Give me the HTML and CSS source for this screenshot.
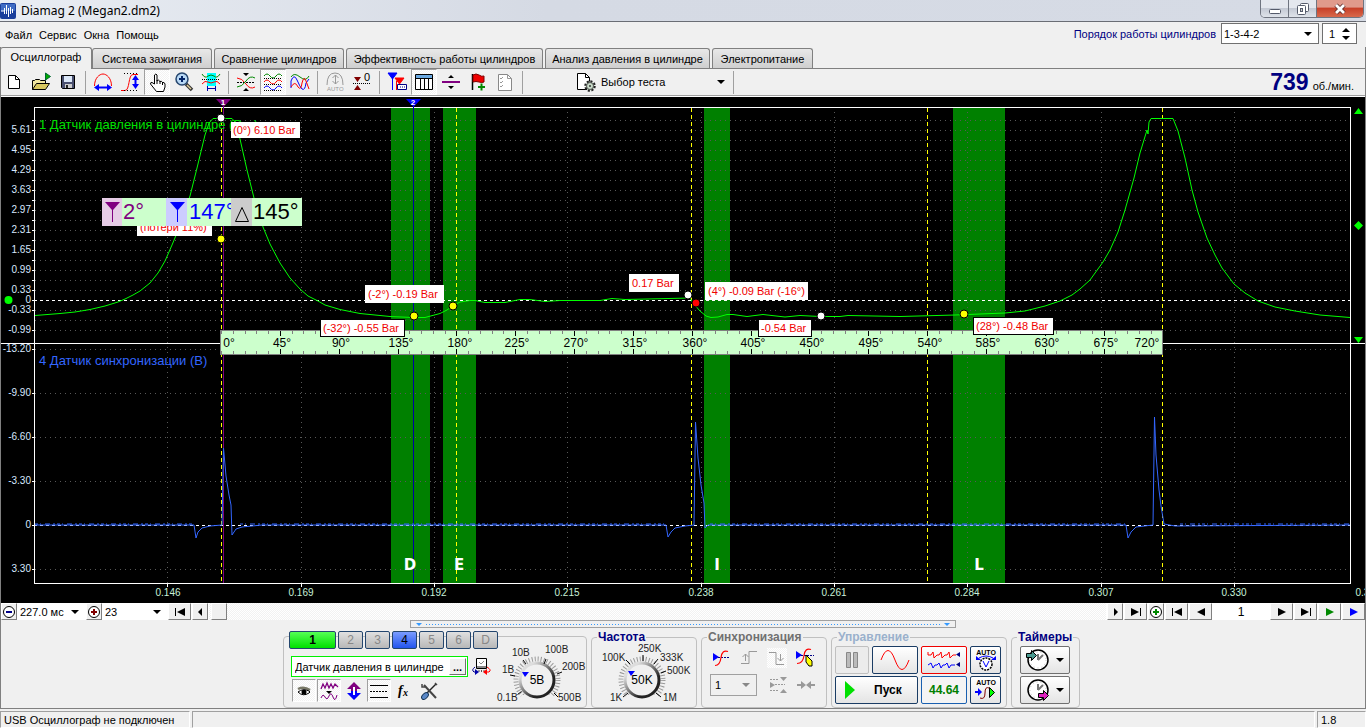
FILE: index.html
```html
<!DOCTYPE html>
<html lang="ru">
<head>
<meta charset="utf-8">
<title>Diamag 2 (Megan2.dm2)</title>
<link rel="stylesheet" href="styles.css">
</head>
<body>
<div class="window">
<header class="titlebar">
  <svg class="app-icon" width="16" height="16" viewBox="0 0 16 16"><rect width="16" height="16" rx="2" fill="#1a3f9c"/><rect x="1" y="1" width="14" height="7" fill="#3f6cc4"/><path d="M1 8h3M4.500 5v6M6.500 2v9M8.500 5v9M10.500 4v7M12.500 6v4" stroke="#fff" fill="none"/></svg>
  <h1 class="title">Diamag 2 (Megan2.dm2)</h1>
  <div class="winbtns">
    <button class="win win-min" aria-label="Свернуть"><svg width="12" height="12" viewBox="0 0 12 12"><rect x=".5" y="6.500" width="11" height="4" rx="1" fill="#fff" stroke="#555b6b"/></svg></button>
    <button class="win win-max" aria-label="Развернуть"><svg width="12" height="12" viewBox="0 0 12 12"><rect x="3.500" y=".5" width="8" height="8" rx="1" fill="#fff" stroke="#555b6b"/><rect x=".5" y="2.500" width="8" height="9" rx="1" fill="#fff" stroke="#555b6b"/><rect x="3.500" y="5.500" width="2" height="3" fill="#ccc" stroke="#555b6b"/></svg></button>
    <button class="win win-close" aria-label="Закрыть"><svg width="14" height="12" viewBox="0 0 14 12"><path d="M3 2l8 8M11 2l-8 8" stroke="#5a2a2a" stroke-width="4.500"/><path d="M3 2l8 8M11 2l-8 8" stroke="#fff" stroke-width="2.800"/></svg></button>
  </div>
</header>
<div class="menurow">
  <nav class="menu"><button>Файл</button><button>Сервис</button><button>Окна</button><button>Помощь</button></nav>
  <div class="order">
    <label for="order">Порядок работы цилиндров</label>
    <span class="combo combo-order"><select id="order"><option>1-3-4-2</option></select></span>
    <span class="spin"><input type="text" value="1" aria-label="Номер цилиндра"><svg width="8" height="14" viewBox="0 0 8 14"><path d="M0 5l4-4 4 4zM0 9l4 4 4-4z"/></svg></span>
  </div>
</div>
<main class="main">
<div class="tabs" role="tablist">
  <button role="tab" class="tab active" aria-selected="true">Осциллограф</button>
  <button role="tab" class="tab tab-ign">Система зажигания</button>
  <button role="tab" class="tab tab-cmp">Сравнение цилиндров</button>
  <button role="tab" class="tab tab-eff">Эффективность работы цилиндров</button>
  <button role="tab" class="tab tab-prs">Анализ давления в цилиндре</button>
  <button role="tab" class="tab tab-pwr">Электропитание</button>
</div>
<div class="toolbar">
  <button class="tool" aria-label="Новый"><svg viewBox="0 0 20 20"><path d="M4.500 3.500h7l4 4v9h-11z" fill="#fff" stroke="#000"/><path d="M11.500 3.500v4h4" fill="none" stroke="#000"/></svg></button>
  <button class="tool" aria-label="Открыть"><svg viewBox="0 0 20 20"><path d="M1.500 17.500v-9h2l1-1h4l1 1h5v3" fill="#f0e6a0" stroke="#000"/><path d="M1.500 17.500l4-6h13l-4 6z" fill="#d8c860" stroke="#000"/><path d="M14.500 1v7l5-3.500z" fill="#0a0" stroke="#063"/></svg></button>
  <button class="tool" aria-label="Сохранить"><svg viewBox="0 0 20 20"><path d="M3.500 3.500h13v13h-12l-1-1z" fill="#4a5070" stroke="#000"/><path d="M6 4h8v6H6z" fill="#dce8f8"/><path d="M7 12h7v4H7z" fill="#ccc"/><path d="M8 13h2v3H8z" fill="#222"/></svg></button>
  <i class="sep"></i>
  <button class="tool" aria-label="Масштаб по горизонтали"><svg viewBox="0 0 20 20"><path d="M1.500 14c0-8 5-12 8.500-12s8.500 4 8.500 12" fill="none" stroke="red"/><path d="M4 15.500h12" stroke="#00f" stroke-width="2"/><path d="M6 12v7l-5-3.500zM14 12v7l5-3.500z" fill="#00f"/></svg></button>
  <button class="tool" aria-label="Масштаб по вертикали"><svg viewBox="0 0 20 20"><path d="M1 18.500h4c5 0 3-16 8-16h5" fill="none" stroke="red"/><path d="M4 1.500h15M4 18.500h15" stroke="#000" stroke-dasharray="1 2"/><path d="M15.500 5v10" stroke="#00f" stroke-width="2"/><path d="M12 8h7l-3.500-5zM12 12h7l-3.500 5z" fill="#00f"/></svg></button>
  <button class="tool pressed" aria-label="Рука"><svg viewBox="0 0 20 20"><path d="M7.500 12V3q1.500-2 2.500 0v6q1.500-2 3 .5 1.500-1 2.500 1 2-.5 2.500 1.500v3l-1.500 4.500h-7L3.500 12q0-2 1.500-1.500z" fill="#fff" stroke="#000"/><path d="M10 8v4M13 9v3M15.500 10v3" stroke="#000"/></svg></button>
  <button class="tool" aria-label="Лупа"><svg viewBox="0 0 20 20"><path d="M12 12l6 6" stroke="#333" stroke-width="3.500"/><path d="M13 13l4 4" stroke="#dc9" stroke-width="1.500"/><circle cx="8" cy="7" r="6" fill="#b8d8f4" stroke="#26466e" stroke-width="1.500"/><path d="M5 7h6M8 4v6" stroke="#026" stroke-width="2"/></svg></button>
  <button class="tool" aria-label="Интервал"><svg viewBox="0 0 20 20"><path d="M6 1h9v13H6z" fill="#0ff"/><path d="M1 2q3 5 6 2 3-2 6 0 3 3 6-2" fill="none" stroke="#080"/><path d="M1 7.500h18" stroke="#000" stroke-dasharray="1 1"/><path d="M1 12q3-4 6-2 3 2 6 0 3-2 6 2" fill="none" stroke="red"/><path d="M6.500 14v5M14.500 14v5M7 16.500h7" stroke="#00a"/></svg></button>
  <i class="sep"></i>
  <button class="tool" aria-label="Центрировать"><svg viewBox="0 0 20 20"><path d="M1 10.500h18" stroke="#000" stroke-dasharray="2 1"/><path d="M1 6q5 0 9 6t9 3" fill="none" stroke="red"/><path d="M1 15q5 0 9-6t9-3" fill="none" stroke="#080"/><path d="M7 1h6l-3 3zM7 19h6l-3-3z"/></svg></button>
  <button class="tool pressed" aria-label="Раздельно"><svg viewBox="0 0 20 20"><g fill="none"><path d="M1 4q3-4 6 0t6 0 6 0" stroke="#080"/><path d="M1 10q3-4 6 0t6 0 6 0" stroke="red"/><path d="M1 16q3-4 6 0t6 0 6 0" stroke="#00f"/><path d="M1 6.500h18M1 12.500h18M1 18.500h18" stroke="#000" stroke-dasharray="1 1"/></g></svg></button>
  <button class="tool" aria-label="Совместно"><svg viewBox="0 0 20 20"><g fill="none"><path d="M1 5q3-5 9 0t9-1" stroke="#080"/><path d="M1 16V9q3-8 6-1t5 9q3 2 4-6l3-4" stroke="#00f"/><path d="M1 15q4-7 7 0 3 4 4-4 2-8 4-2l3 8" stroke="red"/></g></svg></button>
  <i class="sep"></i>
  <button class="tool" aria-label="Автомасштаб"><svg viewBox="0 0 20 20"><path d="M2 13q0-12 8-12t8 12" fill="none" stroke="#999"/><path d="M10.500 3v9M7.500 6l3-3 3 3M7.500 9l3 3 3-3" fill="none" stroke="#999"/><text x="2" y="19" class="auto-t" fill="#999">AUTO</text></svg></button>
  <button class="tool" aria-label="Ноль"><svg viewBox="0 0 20 20"><path d="M1 11.500h18" stroke="#000" stroke-dasharray="1 1"/><path d="M2 5h7l-3.500 5zM2 18h7l-3.500-5z" fill="#800000"/><text x="12" y="9" class="zero-t">0</text></svg></button>
  <i class="sep"></i>
  <button class="tool" aria-label="Маркеры"><svg viewBox="0 0 20 20"><path d="M1 1h9L5.500 7zM5.500 6v12" fill="#00f" stroke="#00f"/><path d="M8 6h9l-4.500 6zM9.500 9v9" fill="red" stroke="red"/><path d="M10.500 12.500h9v5h-9z" fill="#fff" stroke="#008"/><path d="M13 15h5" stroke="#008" stroke-dasharray="1 1"/></svg></button>
  <button class="tool pressed" aria-label="Таблица"><svg viewBox="0 0 20 20"><path d="M1.500 2.500h17v15h-17z" fill="#fff" stroke="#000"/><path d="M2 3h16v3H2z" fill="#6aa8e0"/><path d="M1.500 6.500h17M6.500 7v10M10.500 7v10M14.500 7v10" stroke="#000"/></svg></button>
  <button class="tool" aria-label="Разделитель"><svg viewBox="0 0 20 20"><path d="M1 10h18" stroke="#800080" stroke-width="2"/><path d="M7 6h6l-3-3zM7 14h6l-3 3z"/></svg></button>
  <button class="tool" aria-label="Флажок"><svg viewBox="0 0 20 20"><path d="M4.500 2v16" stroke="#000" stroke-width="1.500"/><path d="M5 3q3-2 6 0t5 1v6q-2 1-5 0t-6 0z" fill="#e00" stroke="#800000"/><path d="M10 15h7M13.500 11.500v7" stroke="#080" stroke-width="2"/></svg></button>
  <button class="tool" aria-label="Список"><svg viewBox="0 0 20 20"><path d="M3.500 2.500h9l4 4v12h-13z" fill="#fff" stroke="#888"/><path d="M12.500 2.500v4h4M5 6l1 1 2-2M5 10l1 1 2-2M5 14l1 1 2-2" fill="none" stroke="#999"/></svg></button>
  <i class="sep"></i>
  <button class="test">
    <svg width="20" height="20" viewBox="0 0 20 20"><path d="M1.500 1.500h8l4 4v12h-12z" fill="#fff" stroke="#000"/><path d="M9.500 1.500v4h4" fill="none" stroke="#000"/><circle cx="14" cy="14" r="4.500" fill="#c8dcc8" stroke="#222" stroke-width="2.500" stroke-dasharray="2 1.500"/><circle cx="14" cy="14" r="3.500" fill="#c8dcc8" stroke="#555"/><circle cx="14" cy="14" r="1" fill="#333"/></svg>
    <span>Выбор теста</span><i class="arrow"></i>
  </button>
  <i class="sep"></i>
  <div class="rpm"><strong>739</strong><span>об./мин.</span></div>
</div>

<svg class="scope" viewBox="1 97 1364 506" role="img" aria-label="Осциллограмма">
  <rect x="1" y="97" width="1364" height="506" fill="#000"/>
  <g fill="#008000"><rect x="391" y="108" width="39" height="475"/><rect x="443" y="108" width="33" height="475"/><rect x="704" y="108" width="26" height="475"/><rect x="953" y="108" width="52" height="475"/></g>
  <g class="crisp" fill="none">
    <path stroke="#585858" stroke-dasharray="1 4" d="M35 120.500H1350M35 130.500H1350M35 140.500H1350M35 150.500H1350M35 160.500H1350M35 170.500H1350M35 180.500H1350M35 190.500H1350M35 200.500H1350M35 210.500H1350M35 220.500H1350M35 230.500H1350M35 240.500H1350M35 250.500H1350M35 260.500H1350M35 270.500H1350M35 280.500H1350M35 290.500H1350M35 310.500H1350M35 320.500H1350M35 330.500H1350M35 349.500H1350M35 393.500H1350M35 437.500H1350M35 481.500H1350M35 569.500H1350"/>
    <path stroke="#585858" stroke-dasharray="1 4" d="M167.500 112V583M301.500 112V583M434.500 112V583M567.500 112V583M701.500 112V583M834.500 112V583M967.500 112V583M1101.500 112V583M1234.500 112V583"/>
    <path stroke="#fff" stroke-dasharray="3 3" d="M34 300.500H1350M34 525.500H1350"/>
    <path stroke="#fff" d="M34.500 107.500H1350.500V583.500H34.500zM1 343.500H1365"/>
    <path stroke="#fff" d="M32 120.500h2M32 130.500h2M32 140.500h2M32 150.500h2M32 160.500h2M32 170.500h2M32 180.500h2M32 190.500h2M32 200.500h2M32 210.500h2M32 220.500h2M32 230.500h2M32 240.500h2M32 250.500h2M32 260.500h2M32 270.500h2M32 280.500h2M32 290.500h2M32 300.500h2M32 310.500h2M32 330.500h2M32 349.500h2M32 393.500h2M32 437.500h2M32 481.500h2M32 525.500h2M32 569.500h2M167.500 584v3M301.500 584v3M434.500 584v3M567.500 584v3M701.500 584v3M834.500 584v3M967.500 584v3M1101.500 584v3M1234.500 584v3"/>
    <path stroke="#ff0" stroke-dasharray="4 3" d="M221.500 108V583M456.500 108V583M691.500 108V583M927.500 108V583M1162.500 108V583"/>
    <path stroke="#800080" d="M223.500 105V583"/>
    <path stroke="#0000a0" d="M413.500 105V583"/>
  </g>
  <text x="39" y="129" class="ch" fill="#00e000">1 Датчик давления в цилиндре (Bar)</text>
  <text x="39" y="365" class="ch" fill="#3366ff">4 Датчик синхронизации (В)</text>
  <path fill="none" stroke="#00ff00" d="M35 315.500L60 313.500 75 312 90 309.500 105 306 118 302 125 299 133 295 140 291 150 283 158 273 165 261 172 245 177 233 182 218 190 196 197 168 205 135 209 123 213 118.500H232L235 122 240 139 247 170 254 198 263 227 270 244 280 263 290 278 300 289 308 296 318 301 325 305 340 309.500 360 313.500 390 316.500 413 317.500H425L440 313.500 447 310 453 305.500 460 302 470 300.500H475L485 302.500H505L520 299.500H530L545 301.500 560 300.500H600L612 298.500 625 299.500 690 298 693 303 700 311 706 316 711 317.500 718 317 727 314.500H733L747 316.500 763 314.500 785 317 800 315.500 820 316.500H840L848 315.500 900 316.500 955 315 1005 313 1025 311 1045 306 1060 301 1072 295 1080 289 1090 280 1103 262 1110 250 1118 232 1125 210 1134 178 1140 153 1147 130 1148 134 1149 122 1151 118.500H1173L1178 131 1185 158 1192 190 1198 212 1207 238 1215 255 1222 268 1234 284 1245 293 1258 301 1275 307 1295 311 1320 315 1350 317.500"/>
  <g fill="none" stroke="#3366ff">
    <path d="M35 525H194L196 538 198 532 202 528 210 526 222 525 223.500 448 226 476 229 495 231 505 232 535 236 529 242 527 262 525H666L668 537 671 532 675 528 685 526 694 525 695.500 422 698 458 701 485 704 503 705 528 708 525H1126L1128 538 1131 532 1136 527 1153 525 1154.500 417 1156 455 1159 490 1161 506 1164 524 1175 526 1350 525"/>
    <path stroke-dasharray="3 2 1 4 5 3 2 2" d="M35 524H192M240 524H664M710 524H1125M1180 524H1350"/>
  </g>
  <g class="ylab"><text x="31" y="133">5.61</text><text x="31" y="153">4.95</text><text x="31" y="173">4.29</text><text x="31" y="193">3.63</text><text x="31" y="213">2.97</text><text x="31" y="233">2.31</text><text x="31" y="253">1.65</text><text x="31" y="273">0.99</text><text x="31" y="293">0.33</text><text x="31" y="303">0</text><text x="31" y="313">-0.33</text><text x="31" y="333">-0.99</text><text x="31" y="352">-13.20</text><text x="31" y="396">-9.90</text><text x="31" y="440">-6.60</text><text x="31" y="484">-3.30</text><text x="31" y="528">0</text><text x="31" y="572">3.30</text></g>
  <g class="xlab"><text x="168" y="596">0.146</text><text x="301" y="596">0.169</text><text x="434" y="596">0.192</text><text x="567" y="596">0.215</text><text x="701" y="596">0.238</text><text x="834" y="596">0.261</text><text x="967" y="596">0.284</text><text x="1101" y="596">0.307</text><text x="1234" y="596">0.330</text><text x="1368" y="596">0.353</text></g>
  <g class="phase"><text x="410" y="570">D</text><text x="459" y="570">E</text><text x="717" y="570">I</text><text x="979" y="570">L</text></g>
  <path d="M216 99h15l-7.500 8z" fill="#800080"/><path d="M406 99h15l-7.500 8z" fill="#0000ff"/>
  <text x="223" y="105" class="mark">1</text><text x="413" y="105" class="mark">2</text>
  <path fill="#00ff00" d="M1354 114l4.500-6 4.500 6zM1354 337h9l-4.500 6zM1358.500 221l4.500 4.500-4.500 4.500-4.500-4.500z"/><circle cx="8.500" cy="300" r="4" fill="#00ff00"/>
  <!-- crank angle ruler -->
  <rect x="220.500" y="330.500" width="942" height="24" fill="#ccffcc" stroke="#808080" class="crisp"/>
  <g class="crisp" fill="none">
  <path d="M221 332.500H1162M221 352.500H1162" stroke="#808080" stroke-width="3" stroke-dasharray="1 10.767"/>
  <path d="M280 333.500H1162M280 351.500H1162" stroke="#000" stroke-width="5" stroke-dasharray="1 57.833"/>
  </g>
  <g class="deg"><text x="229" y="347">0°</text><text x="282" y="347">45°</text><text x="341" y="347">90°</text><text x="401" y="347">135°</text><text x="460" y="347">180°</text><text x="517" y="347">225°</text><text x="576" y="347">270°</text><text x="635" y="347">315°</text><text x="695" y="347">360°</text><text x="753" y="347">405°</text><text x="812" y="347">450°</text><text x="871" y="347">495°</text><text x="930" y="347">540°</text><text x="988" y="347">585°</text><text x="1047" y="347">630°</text><text x="1106" y="347">675°</text><text x="1147" y="347">720°</text></g>
  <g fill="#fff"><rect x="231" y="122" width="69" height="16"/><rect x="137" y="218" width="75" height="18"/><rect x="365" y="285" width="79" height="18"/><rect x="629" y="274" width="50" height="18"/><rect x="705" y="282" width="103" height="18"/></g>
  <g fill="#fff" stroke="#000"><rect x="320.500" y="319.500" width="84" height="17"/><rect x="758.500" y="319.500" width="53" height="17"/><rect x="973.500" y="317.500" width="80" height="17"/></g>
  <g class="note"><text x="233" y="134">(0°) 6.10 Bar</text><text x="140" y="231">(потери 11%)</text><text x="368" y="298">(-2°) -0.19 Bar</text><text x="632" y="287">0.17 Bar</text><text x="708" y="295">(4°) -0.09 Bar (-16°)</text><text x="323" y="332">(-32°) -0.55 Bar</text><text x="761" y="332">-0.54 Bar</text><text x="976" y="330">(28°) -0.48 Bar</text></g>
  <g stroke="#000"><g fill="#fff"><circle cx="221" cy="118" r="4"/><circle cx="688" cy="295" r="4"/><circle cx="821" cy="316" r="4"/></g><g fill="#ff0"><circle cx="221" cy="239" r="4"/><circle cx="414" cy="316" r="4"/><circle cx="453" cy="306" r="4"/><circle cx="964" cy="314" r="4"/></g><circle cx="696" cy="303" r="4" fill="red"/></g>
  <!-- cursor readout -->
  <rect x="102" y="198" width="200" height="28" fill="#ccffcc"/>
  <rect x="102" y="198" width="20" height="28" fill="#e6cce6"/><rect x="166" y="198" width="21" height="28" fill="#ccccff"/>
  <path d="M105 202h15l-7 8v12h-1v-12z" fill="#800080"/><path d="M170 202h15l-7 8v12h-1v-12z" fill="#00f"/>
  <g class="read"><text x="123" y="219" fill="#800080">2°</text><text x="189" y="219" fill="#00f">147°</text></g>
  <rect x="231" y="198" width="21" height="28" fill="#ccc"/><path d="M235.500 221.500h13l-6.500-14z" fill="none" stroke="#000"/>
  <text x="253" y="219" class="read">145°</text>
</svg>

<div class="navrow">
  <button class="nb" aria-label="Уменьшить"><svg width="14" height="14" viewBox="0 0 14 14"><circle cx="7" cy="7" r="5.500" fill="#fff" stroke="#000"/><path d="M4 7h6" stroke="#008" stroke-width="2"/></svg></button>
  <span class="combo combo-a"><select aria-label="Развёртка"><option>227.0 мс</option></select></span>
  <button class="nb" aria-label="Увеличить"><svg width="14" height="14" viewBox="0 0 14 14"><circle cx="7" cy="7" r="5.500" fill="#fff" stroke="#000"/><path d="M4 7h6M7 4v6" stroke="#800000" stroke-width="2"/></svg></button>
  <span class="combo combo-b"><select aria-label="Делений"><option>23</option></select></span>
  <button class="nb wide" aria-label="В начало"><svg width="12" height="8" viewBox="0 0 12 8"><path d="M1 0h1v8H1zM11 0v8L3 4z"/></svg></button>
  <button class="nb" aria-label="Влево"><svg width="5" height="8" viewBox="0 0 5 8"><path d="M4 0v8L0 4z"/></svg></button>
  <div class="track"><button class="nb thumb" aria-label="Положение"></button></div>
  <button class="nb" aria-label="Вправо"><svg width="5" height="8" viewBox="0 0 5 8"><path d="M1 0v8l4-4z"/></svg></button>
  <button class="nb wide" aria-label="В конец"><svg width="12" height="8" viewBox="0 0 12 8"><path d="M10 0h1v8h-1zM1 0v8l8-4z"/></svg></button>
  <button class="nb" aria-label="Добавить"><svg width="14" height="14" viewBox="0 0 14 14"><circle cx="7" cy="7" r="5.500" fill="#fff" stroke="#000"/><path d="M4 7h6M7 4v6" stroke="#080" stroke-width="2"/></svg></button>
  <button class="nb wide" aria-label="Первый кадр"><svg width="12" height="8" viewBox="0 0 12 8"><path d="M1 0h1v8H1zM11 0v8L3 4z"/></svg></button>
  <button class="nb wide" aria-label="Предыдущий кадр"><svg width="8" height="8" viewBox="0 0 8 8"><path d="M8 0v8L0 4z"/></svg></button>
  <input class="frame" type="text" value="1" aria-label="Кадр">
  <button class="nb wide" aria-label="Следующий кадр"><svg width="8" height="8" viewBox="0 0 8 8"><path d="M0 0v8l8-4z"/></svg></button>
  <button class="nb wide" aria-label="Последний кадр"><svg width="12" height="8" viewBox="0 0 12 8"><path d="M10 0h1v8h-1zM1 0v8l8-4z"/></svg></button>
  <button class="nb wide" aria-label="Воспроизвести"><svg width="8" height="8" viewBox="0 0 8 8"><path d="M0 0v8l8-4z" fill="#080"/></svg></button>
  <button class="nb wide" aria-label="Повтор"><svg width="8" height="8" viewBox="0 0 8 8"><path d="M0 0v8l8-4z" fill="#00f"/></svg></button>
</div>
<div class="splitter"><i class="tri"></i><i class="dots"></i><i class="tri"></i></div>

<section class="panels">
  <div class="group channels">
    <div class="chan-left">
      <div class="chbtns"><button class="ch-b on1">1</button><button class="ch-b">2</button><button class="ch-b">3</button><button class="ch-b on4">4</button><button class="ch-b">5</button><button class="ch-b">6</button><button class="ch-b">D</button></div>
      <div class="sensor"><div class="sensor-field"><input type="text" value="Датчик давления в цилиндре" aria-label="Датчик"><button>...</button></div>
        <button class="flat" aria-label="Подключение"><svg width="20" height="20" viewBox="0 0 20 20"><path d="M5.500 1.500h10v10h-10z" fill="#fff" stroke="#000"/><path d="M6 9h9v2H6z" fill="#888"/><path d="M8 5l2 2 3-3" stroke="#888" fill="none"/><path d="M8 13v2M10.500 13v2M13 13v2" stroke="#555"/><path d="M4 10q-4 3-1 5h2" fill="none" stroke="#008"/><path d="M4 12v6l4-3z" fill="#00a"/><path d="M16 10q5 3 2 5h-2" fill="none" stroke="red"/><path d="M16 12v6l-4-3z" fill="red"/></svg></button></div>
      <div class="chtools">
        <button class="tool pressed" aria-label="Показать"><svg viewBox="0 0 20 20"><path d="M4 8q6-3 12 1" stroke="#776" stroke-width="2.500" fill="none"/><path d="M4 11q5-4 11-1 2 1 0 2-6 4-11-1z" fill="#fff" stroke="#000"/><circle cx="10" cy="11" r="2.500" /></svg></button>
        <button class="tool pressed" aria-label="Фильтр"><svg viewBox="0 0 20 20"><path d="M2 8l2-5 2 4 2-5 2 5 2-4 2 4 2-4 3 3" fill="none" stroke="#800080" stroke-width="1.300"/><path d="M7 10h6l-3 3z"/><path d="M2 17q2-5 4-1t4-1 4 1 4-2" fill="none" stroke="#800080"/></svg></button>
        <button class="tool" aria-label="Смещение"><svg viewBox="0 0 20 20"><path d="M10 1l7 7h-4v2H7V8H3z" fill="#800080"/><path d="M10 19l7-7h-4v-2H7v2H3z" fill="#00f"/><path d="M10 6v8" stroke="#fff" stroke-width="2"/></svg></button>
        <button class="tool pressed" aria-label="Уровни"><svg viewBox="0 0 20 20"><path d="M1 4.500h18M1 16.500h18" stroke="#000"/><path d="M1 10.500h18" stroke="#000" stroke-dasharray="2 1"/></svg></button>
        <button class="tool" aria-label="Функция"><svg viewBox="0 0 20 20"><text x="4" y="14" class="fx">f</text><text x="9" y="15" class="fx-s">x</text></svg></button>
        <button class="tool" aria-label="Настройка"><svg viewBox="0 0 20 20"><path d="M17 3L8 12" stroke="#222" stroke-width="1.500"/><path d="M5 4l12 13" stroke="#444" stroke-width="2"/><path d="M3 3v3h3M16 2l2 2" fill="none" stroke="#444" stroke-width="1.500"/><ellipse cx="6" cy="15" rx="4" ry="2.500" transform="rotate(-45 6 15)" fill="#5a88c8" stroke="#135"/></svg></button>
      </div>
    </div>
    <div class="knob knob-v">
      <svg viewBox="0 0 96 68" width="96" height="68"><use href="#dial" x="44" y="38"/><path d="M28.500 49.500l-4 3M22 34l-5-1M33 22l-3-4M53 17l-2 5M64 32l5-2M61 51l4 4" stroke="#000"/><path d="M29 30h7l-4 5z" fill="#00f"/><text x="44" y="42" class="kv">5В</text><g class="kl"><text x="19" y="14">10В</text><text x="52" y="11">100В</text><text x="69" y="28">200В</text><text x="65" y="59">500В</text><text x="4" y="59">0.1В</text><text x="9" y="31">1В</text></g></svg>
      <input type="range" min="0" max="5" value="2" aria-label="Вольт на деление">
    </div>
  </div>
  <fieldset class="group freq"><legend>Частота</legend>
    <div class="knob">
      <svg viewBox="0 0 100 62" width="100" height="62"><use href="#dial" x="48" y="36"/><path d="M34 49l-5 4M36 20l-4-4M49 11v6M60 20l4-5M67 29l5-2M62 49l5 4" stroke="#000"/><path d="M34 27h7l-4 5z" fill="#00f"/><text x="48" y="40" class="kv">50K</text><g class="kl"><text x="8" y="17">100K</text><text x="44" y="8">250K</text><text x="66" y="17">333K</text><text x="73" y="30">500K</text><text x="16" y="57">1K</text><text x="69" y="57">1M</text></g></svg>
      <input type="range" min="0" max="5" value="2" aria-label="Частота">
    </div>
  </fieldset>
  <fieldset class="group sync"><legend>Синхронизация</legend>
    <div class="syncrow">
      <button class="flat" aria-label="Синхронизация"><svg width="20" height="20" viewBox="0 0 20 20"><path d="M2 5v8l6-4z" fill="#00f"/><path d="M7 9.500h12" stroke="#008" stroke-dasharray="2 1"/><path d="M4 17.500q5 0 6-8t7-6" fill="none" stroke="red" stroke-width="1.200"/></svg></button>
      <button class="flat" aria-label="Фронт"><svg width="20" height="20" viewBox="0 0 20 20"><path d="M2 15.500h8V3.500h8M6.500 13V6M3.500 9l3-3 3 3" fill="none" stroke="#999"/></svg></button>
      <button class="flat hatch" aria-label="Спад"><svg width="20" height="20" viewBox="0 0 20 20"><path d="M2 4.500h7v12h8M13.500 6v7M10.500 10l3 3 3-3" fill="none" stroke="#999"/></svg></button>
      <button class="flat" aria-label="Указать"><svg width="20" height="20" viewBox="0 0 20 20"><path d="M1 3v8l6-4z" fill="#00f"/><path d="M6 7.500h13" stroke="#008" stroke-dasharray="2 1"/><path d="M2 15.500q6 0 7-8t7-6" fill="none" stroke="red" stroke-width="1.200"/><path d="M11 7l6 6v5h-3l-3-4z" fill="#ff0" stroke="#000"/></svg></button>
    </div>
    <div class="syncrow low">
      <span class="combo combo-s"><select aria-label="Канал" disabled><option>1</option></select></span>
      <button class="flat" aria-label="Уровень"><svg width="20" height="20" viewBox="0 0 20 20"><path d="M2 7v6l5-3z" fill="#999"/><path d="M2 4.500h9M2 15.500h9M7 9.500h10" stroke="#999" stroke-dasharray="2 1"/><path d="M12 2h7l-3.500 4zM12 18h7l-3.500-4z" fill="#999"/></svg></button>
      <button class="flat" aria-label="По центру"><svg width="20" height="20" viewBox="0 0 20 20"><path d="M1 9h4V6l5 4-5 4v-3H1zM19 9h-4V6l-5 4 5 4v-3h4z" fill="#999"/></svg></button>
    </div>
  </fieldset>
  <fieldset class="group ctrl"><legend>Управление</legend>
    <div class="ctrlgrid">
      <button class="cb gray" aria-label="Пауза"><svg width="12" height="16" viewBox="0 0 12 16"><path d="M.5.500h4v15h-4zM7.500.500h4v15h-4z" fill="#bbb" stroke="#888"/></svg></button>
      <button class="cb" aria-label="Синус"><svg width="30" height="22" viewBox="0 0 30 22"><path d="M1 11Q8-8 15 11t14 0" fill="none" stroke="red"/></svg></button>
      <button class="cb red" aria-label="Сигналы"><svg width="34" height="20" viewBox="0 0 34 20"><path d="M1 2v3h3l2-3 1 6 3-3h2l2-3 1 6 3-3h2l2-3 1 6 3-3h3" fill="none" stroke="red"/><path d="M1 15l3-2 2 5 2-3h2l2-2 2 5 2-3h2l2-2 2 5 2-3h4" fill="none" stroke="#00f"/><path d="M33 2v5l-4-2.500zM33 12v5l-4-2.500z" fill="#008"/></svg></button>
      <button class="cb" aria-label="Авто диапазон"><svg width="26" height="24" viewBox="0 0 26 24"><text x="13" y="7" class="auto-b">AUTO</text><path d="M6 10q7-4 14 0" fill="none" stroke="#00f"/><path d="M3 8v4h5zM23 8v4h-5z" fill="#00f"/><circle cx="13" cy="16" r="6" fill="#fff" stroke="#000" stroke-width="1.500" stroke-dasharray="2 1"/><path d="M10 13l3 6 3-6" fill="none" stroke="#00f"/></svg></button>
      <button class="cb start"><svg width="10" height="18" viewBox="0 0 10 18"><path d="M0 0l10 9-10 9z" fill="#00e000"/></svg><span>Пуск</span></button>
      <button class="cb num">44.64</button>
      <button class="cb" aria-label="Авто пуск"><svg width="26" height="24" viewBox="0 0 26 24"><text x="13" y="7" class="auto-b">AUTO</text><path d="M2 14h4" stroke="#00f" stroke-width="2"/><path d="M5 10v8l4-4z" fill="#00f"/><path d="M7 20q5 2 5-5t4-5" fill="none" stroke="#800000"/><path d="M16.500 9.500v10l5-5z" fill="#0f0" stroke="#000"/></svg></button>
    </div>
  </fieldset>
  <fieldset class="group timers"><legend>Таймеры</legend>
    <div class="timercol">
      <button class="cb tm" aria-label="Таймер включения"><svg width="24" height="24" viewBox="0 0 24 24"><circle cx="13" cy="12" r="10" fill="#fff" stroke="#000" stroke-width="1.500"/><path d="M13 12V6M13 12l5-5" stroke="#777" stroke-width="2"/><circle cx="13" cy="12" r="8" fill="none" stroke="#bbb" stroke-dasharray="1 3"/><path d="M1.500 5.500h5v-3l5 5-5 5v-3h-5z" fill="#4a9a90" stroke="#000"/></svg><i class="arrow"></i></button>
      <button class="cb tm" aria-label="Таймер выключения"><svg width="24" height="24" viewBox="0 0 24 24"><circle cx="13" cy="12" r="10" fill="#fff" stroke="#000" stroke-width="1.500"/><path d="M13 12V6M13 12l5-5" stroke="#777" stroke-width="2"/><circle cx="13" cy="12" r="8" fill="none" stroke="#bbb" stroke-dasharray="1 3"/><path d="M13.500 15.500h5v-3l5 5-5 5v-3h-5z" fill="#e020c0" stroke="#000"/></svg><i class="arrow"></i></button>
    </div>
  </fieldset>
</section>
</main>
<footer class="status"><span class="st-main">USB Осциллограф не подключен</span><span class="st-mid"></span><span class="st-ver">1.8</span></footer>
</div>
<svg class="defs" width="0" height="0" aria-hidden="true"><defs>
  <linearGradient id="rim" x1="0" y1="0" x2="1" y2="1"><stop offset=".2" stop-color="#ddd"/><stop offset=".7" stop-color="#222"/></linearGradient>
  <g id="dial"><circle r="21" fill="none" stroke="#999" stroke-width="5" stroke-dasharray="1 2"/><path d="M-15 15l-9 11h48l-9-11z" fill="#f0f0f0"/><circle r="18" fill="#f0f0f0"/><circle r="17" fill="#f0f0f0" stroke="url(#rim)" stroke-width="3"/></g>
</defs></svg>
</body>
</html>
```
FILE: styles.css
```css
* { box-sizing: border-box; }
body { margin: 0; background: #f0f0f0; font: 11px/14px "Liberation Sans", Arial, sans-serif; color: #000; }
button, input, select { font: inherit; color: inherit; margin: 0; padding: 0; border: 0; border-radius: 0; background: none; outline: 0; }
.window { display: flex; flex-direction: column; min-height: 100vh; }
.defs { position: absolute; }

.titlebar { display: flex; align-items: center; height: 22px; background: linear-gradient(90deg, #e9edf3, #d5dae4 40%, #d6dbe5); border-bottom: 1px solid #6a6d75; }
.app-icon { margin-right: 5px; }
.title { flex: 1; margin: 0; font: 12px/16px "Noto Sans", sans-serif; }
.winbtns { display: flex; align-self: flex-start; height: 18px; margin-right: 2px; border: 1px solid #6f7480; border-top: 0; border-radius: 0 0 5px 5px; overflow: hidden; }
.win { display: grid; place-items: center; width: 28px; background: linear-gradient(#e4e7ee 45%, #c4c9d4 50%, #dfe3ea); border-right: 1px solid #6f7480; }
.win-close { width: 46px; border: 0; background: linear-gradient(#e09a8c 40%, #c8412a 50%, #d8694c); }

.menurow { display: flex; justify-content: space-between; height: 25px; }
.menu { display: flex; gap: 7px; padding: 6px 5px 0; }
.menu button { height: 14px; line-height: 14px; }
.order { display: flex; gap: 5px; padding: 1px 9px 3px 0; }
.order label { color: #000080; line-height: 22px; }
.combo { position: relative; display: flex; background: #fff; }
.combo select { flex: 1; width: 100%; appearance: none; }
.combo::after, .arrow, .tri { content: ""; border: 4px solid transparent; border-top-color: #000; border-bottom: 0; width: 0; height: 0; }
.combo::after { position: absolute; right: 6px; top: 50%; margin-top: -2px; pointer-events: none; }
.combo-order { width: 98px; border: 1px solid #707070; }
.combo-order select { padding: 0 2px; }
.spin { display: flex; align-items: center; width: 35px; margin-left: -2px; padding: 0 6px; background: #fff; border: 1px solid #707070; }
.spin input { flex: 1; min-width: 0; width: 12px; }

.main { flex: 1; display: flex; flex-direction: column; border: 1px solid #808080; border-top: 0; }
.tabs { display: flex; gap: 2px; align-items: flex-end; height: 22px; margin-left: -1px; border-bottom: 1px solid #808080; }
.tab { height: 20px; background: linear-gradient(#e8e8e8, #cfcfcf); border: 1px solid #808080; border-bottom: 0; border-radius: 3px 3px 0 0; white-space: nowrap; }
.tab.active { width: 92px; height: 22px; padding-bottom: 3px; margin: 0 -2px -1px 0; background: #f0f0f0; }
.tab-ign { width: 120px; }
.tab-cmp { width: 130px; }
.tab-eff { width: 197px; }
.tab-prs { width: 165px; }
.tab-pwr { width: 101px; }

.toolbar { display: flex; gap: 1px; align-items: center; height: 28px; border-bottom: 1px solid #fff; box-shadow: inset 0 -1px #a0a0a0; padding-bottom: 1px; }
.tool { display: grid; place-items: center; width: 26px; height: 26px; border: 1px solid transparent; }
.tool svg { width: 20px; height: 20px; }
.pressed, .hatch, .track { background: repeating-conic-gradient(#f2f2f2 0 25%, #fff 0 50%) 0 0 / 2px 2px; }
.pressed { border-color: #a0a0a0 #fff #fff #a0a0a0; }
.sep { width: 1px; height: 23px; margin: 0 3px; background: #a0a0a0; }
.test { display: flex; align-items: center; gap: 5px; width: 153px; margin-left: 49px; padding-right: 4px; }
.test .arrow { margin-left: auto; }
.rpm { display: flex; align-items: baseline; gap: 4px; margin-left: auto; padding-right: 11px; }
.rpm strong { font-size: 23px; line-height: 24px; color: #000080; }
.auto-t { font: 6px "Liberation Sans", sans-serif; }
.auto-b { font: bold 7px "Liberation Sans", sans-serif; text-anchor: middle; }
.zero-t { font: 11px "Liberation Sans", sans-serif; }

.scope { display: block; width: 100%; height: auto; font-family: "Liberation Sans", Arial, sans-serif; }
.crisp { shape-rendering: crispEdges; }
.ch { font-size: 13px; }
.ylab { font-size: 10px; fill: #d8e8ff; text-anchor: end; }
.xlab { font-size: 10px; fill: #c8f0d8; text-anchor: middle; }
.phase { font: bold 15px "DejaVu Sans", sans-serif; fill: #fff; text-anchor: middle; }
.mark { font: bold 8px "Liberation Sans", sans-serif; fill: #fff; text-anchor: middle; }
.deg { font-size: 12px; text-anchor: middle; }
.note { font-size: 11px; fill: #f00000; }
.read { font-size: 22px; }

.navrow { display: flex; gap: 1px; height: 17px; background: #fff; }
.nb { display: grid; place-items: center; flex: none; width: 16px; background: #f0f0f0; border: 1px solid; border-color: #fff #808080 #808080 #fff; }
.nb.wide { width: 23px; }
.combo-a { width: 67px; }
.combo-b { width: 64px; }
.combo-a select, .combo-b select { padding-left: 2px; }
.track { display: flex; flex: 1; }
.thumb { margin-left: 2px; }
.frame { width: 56px; text-align: center; font-size: 12px; }

.splitter { display: flex; align-items: center; gap: 4px; align-self: center; width: 40%; height: 8px; padding: 0 5px; border: 1px solid #a0a0a0; }
.tri { border-width: 3px 3px 0; border-top-color: #3399ff; }
.dots { flex: 1; height: 1px; background: repeating-linear-gradient(90deg, #3399ff 0 1px, transparent 1px 3px); }

.panels { display: flex; justify-content: center; gap: 4px; padding: 2px 3px 0 0; }
.group { margin: 0; padding: 0; border: 1px solid #c0c0c0; border-radius: 4px; min-width: 0; height: 78px; }
legend { margin-left: 5px; padding: 0 1px; font: bold 12px/14px "Liberation Sans", sans-serif; color: #000080; }
.channels { display: flex; width: 304px; height: 72px; margin-top: 6px; }
.chan-left { display: flex; flex: none; flex-direction: column; width: 216px; margin-top: -6px; padding-left: 5px; }
.chbtns { display: flex; gap: 2px; }
.ch-b { flex: none; width: 25px; height: 18px; font-size: 12px; color: #888; background: linear-gradient(#e0e0e0, #b8b8b8); border: 1px solid #24466e; border-radius: 2px; }
.on1 { width: 47px; color: #000; font-weight: bold; background: linear-gradient(#5f5, #00e000); }
.on4 { color: #000; background: linear-gradient(#7a9cff, #2255ee); }
.sensor { display: flex; align-items: center; gap: 3px; margin: 7px 0 2px 2px; }
.sensor-field { display: flex; width: 177px; height: 21px; background: #fff; border: 1px solid #00f000; padding: 1px; }
.sensor-field input { flex: 1; min-width: 0; padding-left: 2px; }
.sensor-field button { width: 17px; background: #f0f0f0; border: 1px solid; border-color: #fff #707070 #707070 #fff; font-weight: bold; line-height: 8px; }
.flat { display: grid; place-items: center; }
.chtools { display: flex; gap: 1px; margin-left: 3px; }
.chtools .tool { width: 24px; height: 23px; }
.fx { font: italic bold 14px "Liberation Serif", serif; }
.fx-s { font: italic bold 10px "Liberation Serif", serif; }

.knob { position: relative; }
.knob svg { display: block; }
.knob input { position: absolute; inset: 8px 24px; width: auto; opacity: 0; }
.knob-v { margin: 5px 0 0 -7px; }
.kv { font-size: 12px; text-anchor: middle; }
.kl { font-size: 10px; fill: #222; }
.freq { width: 106px; }
.freq .knob { margin-left: 2px; }
.sync { width: 126px; }
.sync legend { color: #707070; }
.syncrow { display: flex; gap: 8px; padding: 4px 9px 0; }
.syncrow .flat { width: 20px; height: 20px; }
.syncrow.low { padding: 6px 8px 0; align-items: center; }
.combo-s { width: 47px; height: 22px; margin-right: 3px; background: #f0f0f0; border: 1px solid #a0a0a0; }
.combo-s select { padding-left: 4px; opacity: 1; color: #000; }
.combo-s::after { border-top-color: #888; }
.ctrl { width: 176px; }
.ctrl legend { color: #9ab0cc; }
.ctrlgrid { display: grid; grid-template-columns: 34px 46px 46px 31px; gap: 2px 3px; padding: 2px 3px 0; }
.cb { display: grid; place-items: center; height: 28px; background: linear-gradient(#fff, #e4e4e4); border: 1px solid #1a3c64; border-radius: 2px; }
.gray { border-color: #c0c0c0; background: #ececec; }
.red { border-color: #e00; }
.start { display: flex; align-items: center; gap: 19px; grid-column: span 2; padding-left: 9px; font-weight: bold; font-size: 12px; }
.num { border-color: #1a60b0; color: #008000; font-weight: bold; font-size: 12px; background: #f4f4f4; }
.timers { width: 69px; }
.timercol { display: grid; gap: 2px; padding: 2px 9px 0 8px; }
.tm { display: flex; align-items: center; gap: 7px; padding-left: 4px; border-color: #707070; }

.status { display: flex; gap: 2px; height: 19px; padding-top: 2px; }
.status span { padding: 1px 3px; border: 1px solid; border-color: #a0a0a0 #fff #fff #a0a0a0; }
.st-main { width: 190px; }
.st-mid { flex: 1; }
.st-ver { width: 49px; }
```
